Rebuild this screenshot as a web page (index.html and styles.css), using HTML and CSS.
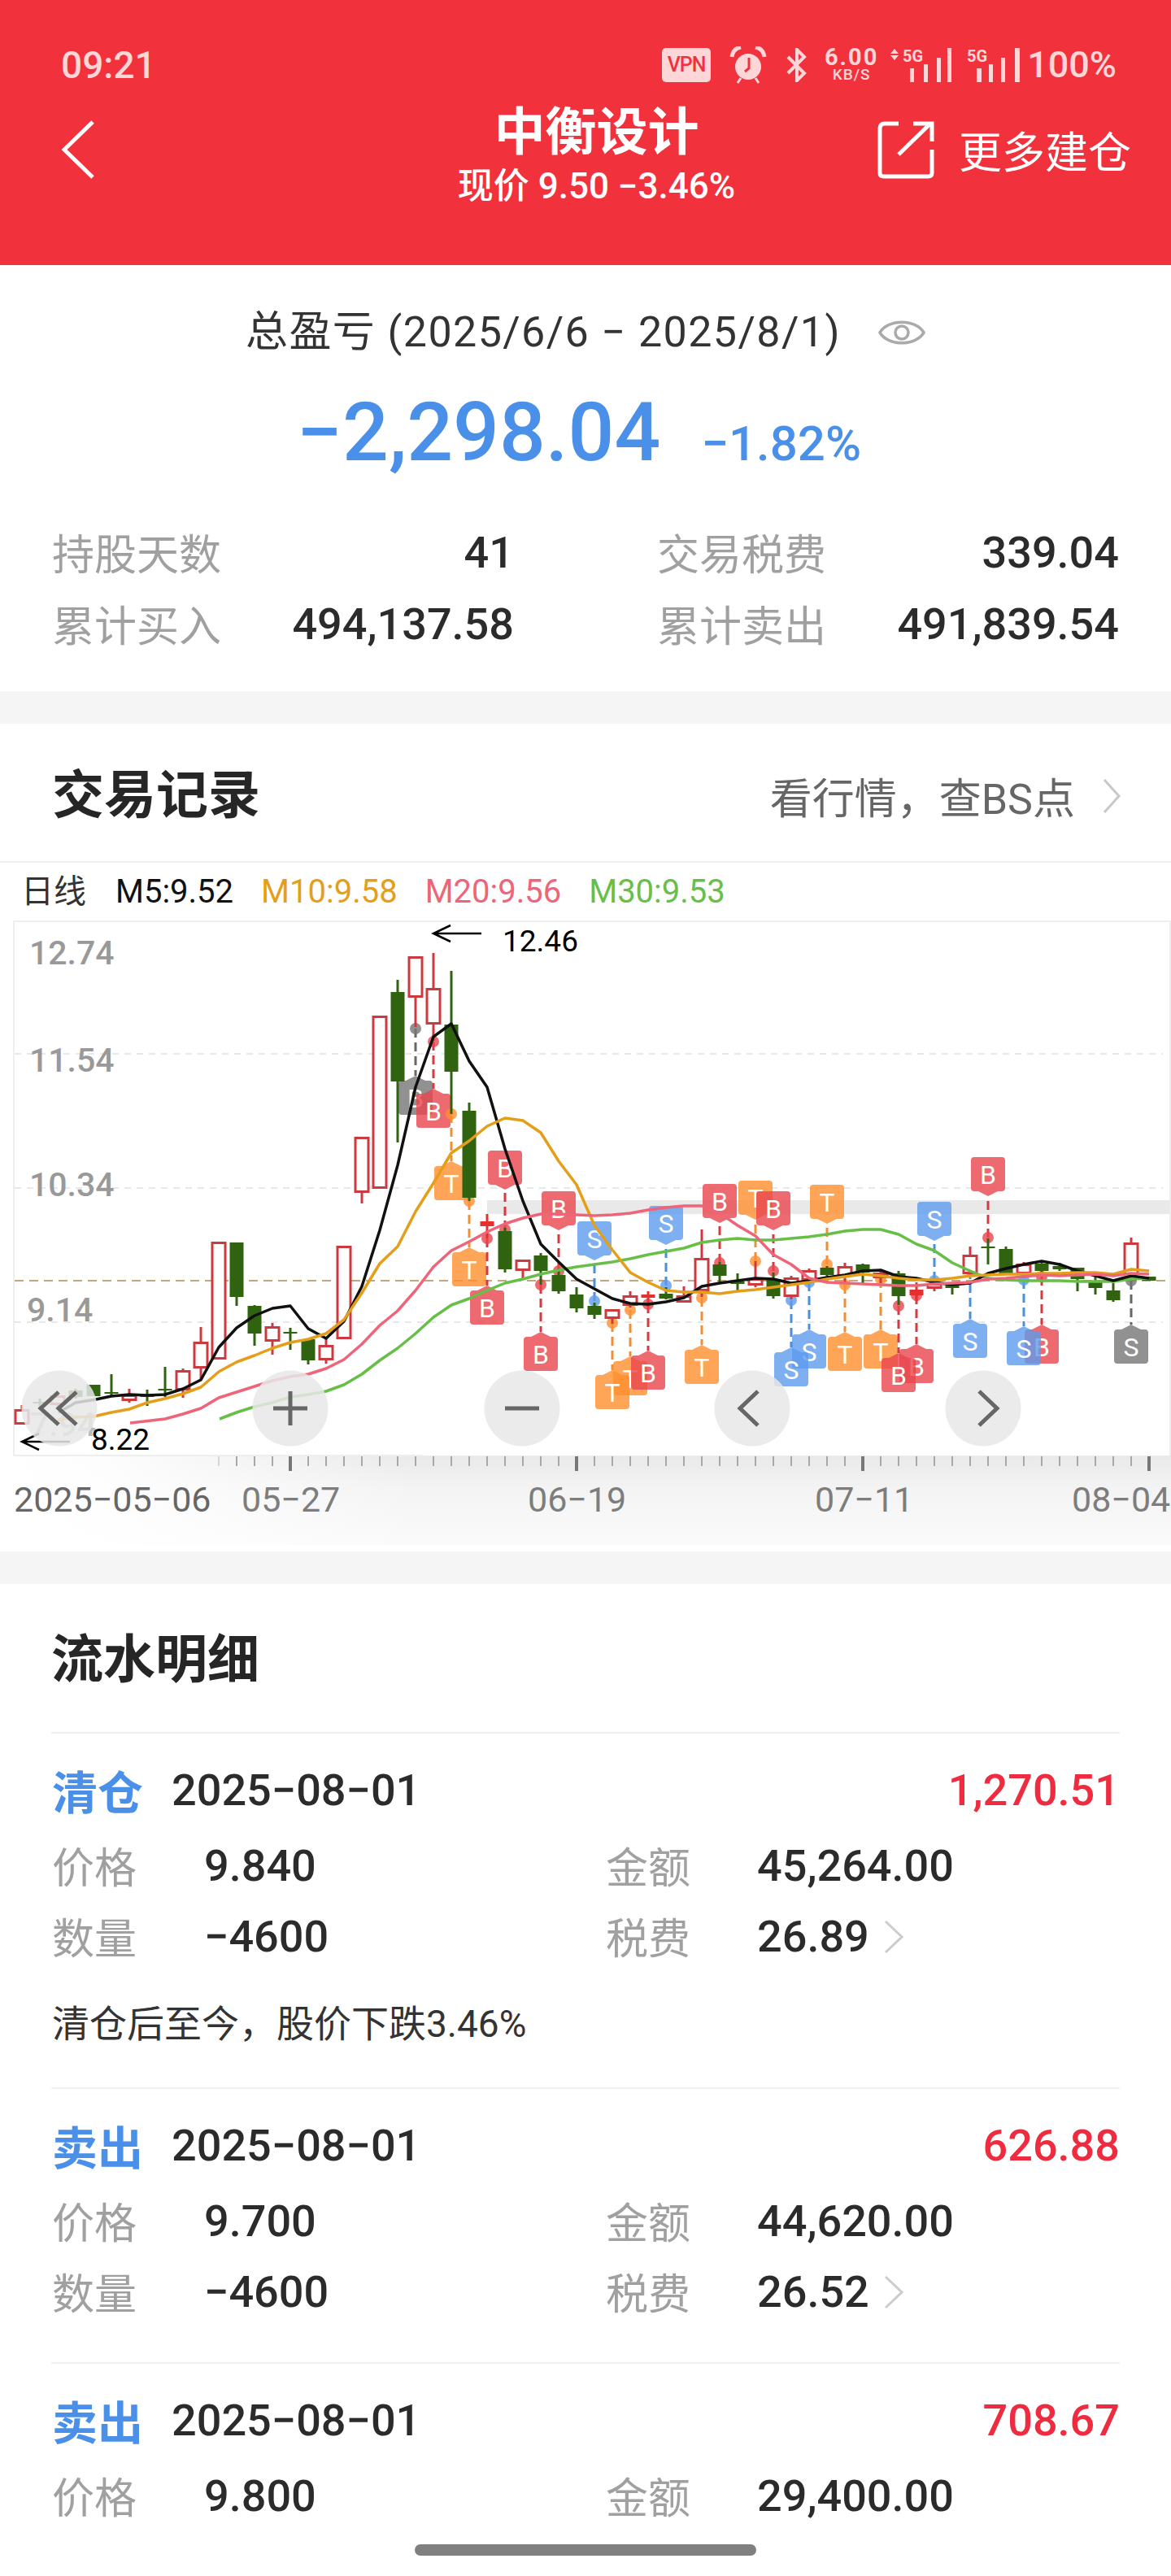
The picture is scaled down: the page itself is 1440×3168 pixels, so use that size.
FILE: index.html
```html
<!DOCTYPE html>
<html lang="zh-CN">
<head>
<meta charset="utf-8">
<title>中衡设计</title>
<link rel="stylesheet" href="styles.css">
</head>
<body>
<div class="page">
  <header class="topbar">
    <div class="status">
      <span class="clock">09:21</span>
      <div class="status-icons">
        <span class="vpn">VPN</span>
        <svg class="alarm" viewBox="0 0 46 46" aria-hidden="true">
          <circle cx="23" cy="25" r="16" fill="#ffd6d8"/>
          <path d="M24 14v13l-5 4" fill="none" stroke="#f1323c" stroke-width="3"/>
          <path d="M3 13C4 6 8 2 14 1M43 13C42 6 38 2 32 1" fill="none" stroke="#ffd6d8" stroke-width="5"/>
          <path d="M10 45l4-6M36 45l-4-6" fill="none" stroke="#ffd6d8" stroke-width="3"/>
        </svg>
        <svg class="bt" viewBox="0 0 27 42" aria-hidden="true">
          <path d="M3 11l20 20-9 9V2l9 9L3 31" fill="none" stroke="#ffd6d8" stroke-width="4"/>
        </svg>
        <span class="speed"><b>6.00</b><i>KB/S</i></span>
        <svg class="sig sig-a" viewBox="0 0 76 42" aria-hidden="true">
          <path d="M6 1l5 6H1zM6 15l5-6H1z" fill="#ffd6d8"/>
          <text x="16" y="17" class="sig-label">5G</text>
          <path d="M25 25h5v17h-5zM42 20h5v22h-5zM58 12h5v30h-5zM71 0h5v42h-5z" fill="#ffd6d8"/>
        </svg>
        <svg class="sig sig-b" viewBox="0 0 59 42" aria-hidden="true">
          <text x="-6" y="17" class="sig-label">5G</text>
          <path d="M6 25h6v17H6zM21 20h5v22h-5zM36 12h5v30h-5zM53 0h6v42h-6z" fill="#ffd6d8"/>
        </svg>
        <span class="battery">100%</span>
      </div>
    </div>
    <nav class="nav">
      <svg class="back" viewBox="0 0 40 72" aria-hidden="true">
        <path d="M38 2L3 36l35 34" fill="none" stroke="#fff" stroke-width="5"/>
      </svg>
      <div class="heading">
        <h1>中衡设计</h1>
        <p>现价 9.50 −3.46%</p>
      </div>
      <div class="more">
        <svg class="share" viewBox="0 0 70 72" aria-hidden="true">
          <path d="M26 4H9Q3 4 3 10v55q0 4 5 4h54q5 0 5-4V36" fill="none" stroke="#fff" stroke-width="5"/>
          <path d="M26 42L64 5M44 4h23v22" fill="none" stroke="#fff" stroke-width="5"/>
        </svg>
        <span>更多建仓</span>
      </div>
    </nav>
  </header>

  <section class="summary">
    <div class="range">
      <span>总盈亏 (2025/6/6 − 2025/8/1)</span>
      <svg class="eye" viewBox="0 0 58 42" aria-hidden="true">
        <path d="M2 21C12 4 46 4 56 21 46 38 12 38 2 21z" fill="none" stroke="#aaa" stroke-width="3.5"/>
        <circle cx="29" cy="21" r="8" fill="none" stroke="#aaa" stroke-width="3.5"/>
      </svg>
    </div>
    <div class="profit">
      <strong>−2,298.04</strong>
      <span>−1.82%</span>
    </div>
    <dl class="stats">
      <div><dt>持股天数</dt><dd>41</dd></div>
      <div><dt>交易税费</dt><dd>339.04</dd></div>
      <div><dt>累计买入</dt><dd>494,137.58</dd></div>
      <div><dt>累计卖出</dt><dd>491,839.54</dd></div>
    </dl>
  </section>

  <section class="panel trades">
    <div class="trades-head">
      <h2>交易记录</h2>
      <div class="quote-link">
        <span>看行情，查BS点</span>
        <svg class="chev" viewBox="0 0 22 44" aria-hidden="true"><path d="M2 2l18 20L2 42" fill="none" stroke="#c8c8c8" stroke-width="3"/></svg>
      </div>
    </div>
    <div class="legend">
      <span class="lg-day">日线</span>
      <span class="lg-m5">M5:9.52</span>
      <span class="lg-m10">M10:9.58</span>
      <span class="lg-m20">M20:9.56</span>
      <span class="lg-m30">M30:9.53</span>
    </div>
    <svg id="kline" class="kline" viewBox="0 1132 1440 768" width="1440" height="768"></svg>
  </section>

  <section class="panel ledger">
    <h2>流水明细</h2>
    <article class="entry">
      <div class="entry-head"><b class="tag">清仓</b><span class="date">2025−08−01</span><span class="gain">1,270.51</span></div>
      <div class="grid">
        <span class="k">价格</span><span class="v">9.840</span><span class="k">金额</span><span class="v">45,264.00</span>
        <span class="k">数量</span><span class="v">−4600</span><span class="k">税费</span>
        <span class="v with-chev">26.89<svg class="chev-sm" viewBox="0 0 24 42" aria-hidden="true"><path d="M2 2l20 19L2 40" fill="none" stroke="#ccc" stroke-width="3"/></svg></span>
      </div>
      <p class="note">清仓后至今，股价下跌3.46%</p>
    </article>
    <article class="entry">
      <div class="entry-head"><b class="tag">卖出</b><span class="date">2025−08−01</span><span class="gain">626.88</span></div>
      <div class="grid">
        <span class="k">价格</span><span class="v">9.700</span><span class="k">金额</span><span class="v">44,620.00</span>
        <span class="k">数量</span><span class="v">−4600</span><span class="k">税费</span>
        <span class="v with-chev">26.52<svg class="chev-sm" viewBox="0 0 24 42" aria-hidden="true"><path d="M2 2l20 19L2 40" fill="none" stroke="#ccc" stroke-width="3"/></svg></span>
      </div>
    </article>
    <article class="entry">
      <div class="entry-head"><b class="tag">卖出</b><span class="date">2025−08−01</span><span class="gain">708.67</span></div>
      <div class="grid">
        <span class="k">价格</span><span class="v">9.800</span><span class="k">金额</span><span class="v">29,400.00</span>
      </div>
    </article>
  </section>

  <div class="home-bar"></div>
</div>
<script src="chart.js"></script>
</body>
</html>
```
FILE: styles.css
```css
* { box-sizing: border-box; }
html, body { margin: 0; padding: 0; background: #fff; }
body { font-family: Roboto, "Noto Sans CJK SC", sans-serif; color: #2b2b2b; }
h1, h2, p, dl, dd { margin: 0; }

.page { position: relative; width: 1440px; height: 3168px; overflow: hidden; background: #fff; }

/* red title area */
.topbar { height: 326px; background: #f1323c; color: #fff; }
.status { display: flex; justify-content: space-between; align-items: center; height: 46px; margin-top: 0; padding: 0 67px 0 75px; position: relative; top: 57px; color: #ffd6d8; }
.clock { font-size: 46px; font-weight: 500; line-height: 46px; }
.status-icons { display: flex; align-items: center; }
.vpn { width: 60px; height: 42px; border-radius: 5px; background: #ffd6d8; color: #f1323c; font-size: 25px; font-weight: 500; line-height: 42px; text-align: center; letter-spacing: -1px; }
.alarm { width: 46px; height: 46px; margin-left: 23px; }
.bt { width: 27px; height: 42px; margin-left: 23px; }
.speed { display: flex; flex-direction: column; align-items: center; width: 72px; margin-left: 18px; }
.speed b { font-size: 29px; font-weight: 700; line-height: 24px; letter-spacing: 2px; }
.speed i { font-size: 19px; font-weight: 500; font-style: normal; line-height: 20px; letter-spacing: 1px; }
.sig { height: 42px; }
.sig-a { width: 76px; margin-left: 11px; }
.sig-b { width: 59px; margin-left: 25px; overflow: visible; }
.sig-label { font-size: 20px; font-weight: 700; fill: #ffd6d8; }
.battery { font-size: 45px; font-weight: 500; line-height: 46px; margin-left: 9px; }

.nav { display: grid; grid-template-columns: 1fr auto 1fr; height: 140px; margin-top: 0; padding: 0 49px 0 76px; position: relative; top: 78px; }
.back { width: 40px; height: 72px; margin-top: 24px; }
.heading { text-align: center; }
.heading h1 { font-size: 63px; font-weight: 700; line-height: 78px; }
.heading p { font-size: 44px; font-weight: 500; line-height: 52px; margin-top: 1px; }
.more { display: flex; justify-content: flex-end; align-items: center; gap: 30px; height: 72px; margin-top: 24px; font-size: 53px; }
.share { width: 70px; height: 72px; }

/* profit summary */
.summary { height: 524px; padding-top: 53px; }
.range { display: flex; justify-content: center; align-items: center; gap: 46px; height: 60px; padding-right: 0; font-size: 52px; line-height: 60px; color: #333; letter-spacing: 1.4px; }
.eye { width: 58px; height: 42px; }
.profit { display: flex; justify-content: center; align-items: baseline; gap: 50px; height: 112px; margin-top: 37px; color: #4a90e8; padding-right: 16px; }
.profit strong { font-size: 100px; font-weight: 500; line-height: 112px; }
.profit span { font-size: 60px; font-weight: 500; }
.stats { display: grid; grid-template-columns: 568px 568px; column-gap: 176px; row-gap: 28px; margin-top: 66px; padding: 0 64px; }
.stats div { display: flex; justify-content: space-between; align-items: center; height: 60px; }
.stats dt { font-size: 52px; line-height: 60px; color: #a0a0a0; }
.stats dd { font-size: 54px; font-weight: 500; line-height: 60px; position: relative; top: -4px; }

.panel { border-top: 40px solid #f5f5f5; }
.panel h2 { font-size: 64px; font-weight: 700; line-height: 76px; color: #262626; }

/* trade chart */
.trades { height: 1058px; }
.trades-head { display: flex; justify-content: space-between; align-items: center; height: 171px; padding: 8px 62px 0 64px; border-bottom: 2px solid #f0f0f0; }
.quote-link { display: flex; align-items: center; gap: 34px; font-size: 52px; color: #666; }
.chev { width: 22px; height: 44px; }
.legend { display: flex; align-items: center; gap: 34px; height: 71px; padding-left: 26px; font-size: 40px; line-height: 44px; padding-top: 0; }
.lg-day { color: #333; margin-right: 2px; }
.lg-m5 { color: #111; }
.lg-m10 { color: #e59e1a; }
.lg-m20 { color: #ee6478; }
.lg-m30 { color: #67bf48; }
.kline { display: block; }
.price-label { font-size: 41px; font-weight: 500; fill: #999; }
.price-label.under { fill: #bbb; }
.extreme { font-size: 37px; fill: #000; }
.axis-date { font-size: 43px; fill: #7d7d7d; }
.axis-date.first { fill: #666; }
.badge-text { font-size: 32px; fill: #fff; text-anchor: middle; }

/* transaction list */
.ledger { padding: 0 63px; }
.ledger h2 { height: 182px; padding-top: 56px; }
.entry { border-top: 2px solid #f0f0f0; padding: 44px 0 52px; }
.entry-head { display: flex; align-items: center; height: 60px; }
.tag { width: 148px; padding-left: 1px; font-size: 56px; font-weight: 700; line-height: 60px; color: #4a90e8; }
.date { font-size: 54px; font-weight: 500; line-height: 60px; position: relative; top: -4px; }
.gain { margin-left: auto; font-size: 54px; font-weight: 500; line-height: 60px; color: #ee2b3f; position: relative; top: -4px; }
.grid { display: grid; grid-template-columns: 187px 494px 186px 1fr; row-gap: 27px; margin-top: 33px; padding-left: 1px; align-items: center; }
.k { font-size: 52px; line-height: 60px; color: #a0a0a0; }
.v { font-size: 54px; font-weight: 500; line-height: 60px; position: relative; top: -4px; }
.with-chev { display: flex; align-items: center; gap: 18px; }
.chev-sm { width: 24px; height: 42px; }
.note { height: 52px; margin-top: 47px; padding-left: 1px; font-size: 46px; line-height: 52px; color: #333; }

.home-bar { position: absolute; left: 510px; bottom: 25px; width: 420px; height: 14px; border-radius: 7px; background: #808080; }
```
FILE: chart.js
```js
// Draws the daily k-line with moving averages and trade markers.
const NS = 'http://www.w3.org/2000/svg';
const svg = document.getElementById('kline');

function el(name, attrs, text) {
  const n = document.createElementNS(NS, name);
  for (const k in attrs) n.setAttribute(k, attrs[k]);
  if (text !== undefined) n.textContent = text;
  svg.appendChild(n);
  return n;
}

const RED = '#cc3a40', BRIGHT = '#e5302f', GREEN = '#2f6310';
const colX = i => 27 + 22 * i;

// [column, rising?, wick top, body top, body bottom, wick bottom]
const candles = [
  [0,1,1728,1733,1752,1752],[1,0,1720,1724,1726,1733],[2,1,1712,1716,1728,1730],[3,0,1708,1710,1718,1720],
  [4,0,1703,1703,1717,1717],[5,0,1690,1712,1714,1718],[6,1,1708,1715,1723,1725],[7,0,1709,1715,1718,1729],
  [8,0,1681,1708,1710,1718],[9,1,1683,1685,1710,1719],[10,1,1632,1650,1683,1697],[11,1,1527,1527,1672,1672],
  [12,0,1528,1528,1595,1606],[13,0,1605,1606,1640,1655],[14,1,1627,1631,1650,1666],[15,0,1633,1638,1640,1660],
  [16,0,1647,1647,1673,1678],[17,1,1647,1654,1673,1677],[18,1,1532,1532,1647,1647],[19,1,1398,1398,1467,1480],
  [20,1,1249,1249,1462,1462],[21,0,1205,1220,1330,1405],[22,1,1176,1176,1227,1263],[23,1,1172,1215,1260,1280],
  [24,0,1194,1260,1318,1370],[25,0,1356,1366,1473,1477],[26,2,1493,1502,1508,1523],[27,0,1510,1514,1561,1565],
  [28,1,1549,1549,1563,1573],[29,0,1541,1544,1563,1580],[30,0,1560,1568,1588,1591],[31,0,1583,1592,1609,1614],
  [32,0,1602,1606,1617,1622],[33,1,1610,1610,1622,1628],[34,1,1588,1593,1606,1608],[35,2,1588,1592,1596,1607],
  [36,0,1583,1591,1597,1598],[37,1,1582,1593,1602,1602],[38,1,1512,1547,1588,1595],[39,0,1552,1555,1569,1577],
  [40,0,1566,1576,1579,1588],[41,1,1551,1572,1581,1583],[42,0,1565,1573,1594,1597],[43,1,1569,1571,1595,1598],
  [44,1,1560,1562,1575,1576],[45,0,1557,1559,1568,1572],[46,1,1553,1557,1570,1577],[47,0,1554,1555,1565,1578],
  [48,1,1563,1565,1572,1578],[49,0,1563,1566,1594,1605],[50,2,1577,1586,1593,1600],[51,1,1576,1578,1585,1588],
  [52,0,1577,1580,1584,1592],[53,1,1533,1543,1567,1568],[54,0,1523,1533,1534,1555],[55,0,1533,1536,1566,1567],
  [56,1,1552,1554,1567,1572],[57,0,1552,1554,1563,1567],[58,0,1553,1557,1561,1563],[59,0,1559,1559,1573,1588],
  [60,0,1570,1577,1584,1592],[61,0,1578,1587,1599,1601],[62,1,1522,1528,1568,1575],[63,0,1570,1570,1575,1575]
];

const ma5 = '72,1737 93,1725 118,1721 137,1717 159,1715 181,1716 203,1715 225,1708 247,1697 269,1657 291,1633 313,1618 335,1609 357,1606 379,1634 401,1646 423,1625 445,1582 467,1513 489,1433 511,1337 533,1275 555,1259 577,1305 599,1337 621,1413 643,1477 665,1530 687,1552 709,1573 731,1585 753,1597 775,1603 797,1604 819,1601 841,1596 863,1582 885,1578 907,1575 929,1572 951,1573 973,1578 995,1575 1017,1571 1039,1568 1061,1563 1083,1562 1105,1570 1127,1572 1149,1577 1171,1580 1193,1578 1215,1566 1237,1560 1259,1555 1281,1551 1303,1555 1325,1563 1347,1569 1369,1575 1391,1569 1413,1572';
const ma10 = '71,1746 93,1743 115,1742 137,1737 159,1733 181,1725 203,1720 225,1714 247,1706 269,1687 291,1675 313,1667 335,1658 357,1651 379,1647 401,1640 423,1623 445,1590 467,1554 489,1533 511,1490 533,1455 555,1418 577,1403 599,1385 621,1375 643,1378 665,1393 687,1428 709,1457 731,1507 753,1537 775,1565 797,1577 819,1587 841,1589 863,1589 885,1591 907,1588 929,1586 951,1583 973,1580 995,1577 1017,1573 1039,1570 1061,1567 1083,1569 1105,1572 1127,1574 1149,1574 1171,1572 1193,1569 1215,1568 1237,1567 1259,1567 1281,1566 1303,1566 1325,1565 1347,1565 1369,1567 1391,1561 1413,1563';
const ma20 = '160,1750 203,1745 225,1739 247,1732 269,1719 291,1712 313,1705 335,1698 357,1693 379,1690 401,1683 423,1672 445,1653 467,1630 489,1612 511,1587 533,1558 555,1538 577,1527 599,1515 621,1505 643,1498 665,1493 687,1493 709,1494 731,1495 753,1494 775,1492 797,1488 819,1485 841,1483 863,1483 885,1492 907,1507 929,1520 951,1543 973,1555 995,1572 1017,1577 1039,1578 1061,1579 1083,1580 1105,1581 1127,1581 1149,1579 1171,1578 1193,1577 1215,1573 1237,1572 1259,1570 1281,1568 1303,1569 1325,1568 1347,1567 1369,1569 1391,1566 1413,1567';
const ma30 = '270,1745 291,1737 313,1730 335,1725 357,1718 379,1715 401,1711 423,1703 445,1690 467,1673 489,1658 511,1640 533,1620 555,1605 577,1597 599,1587 621,1578 643,1573 665,1567 687,1562 709,1558 731,1555 753,1552 775,1548 797,1543 819,1539 841,1535 863,1528 885,1525 907,1523 929,1525 951,1525 973,1523 995,1521 1017,1518 1039,1514 1061,1512 1083,1512 1105,1518 1127,1530 1149,1538 1171,1553 1193,1563 1215,1572 1237,1574 1259,1575 1281,1575 1303,1575 1325,1576 1347,1576 1369,1576 1391,1573 1413,1572';

const KINDS = {
  B: { fill: '#e8454e', line: '#d43a42' },
  T: { fill: '#ff8f2e', line: '#ef8f35' },
  S: { fill: '#5c9bed', line: '#4b8fd8' },
  G: { fill: '#757575', line: '#666666' }
};

// [label, kind, x, dot y, badge top]; a badge above its dot points down, one below points up
const markers = [
  ['B','G',511,1265,1329],['B','B',533,1281,1345],['T','T',555,1370,1434],['B','B',621,1512,1415],
  ['T','T',577,1477,1540],['B','B',599,1523,1587],['B','B',665,1580,1644],['B','B',687,1563,1465],
  ['S','S',731,1600,1502],['S','S',819,1581,1483],['T','T',775,1611,1674],['T','T',753,1627,1691],
  ['B','B',797,1604,1667],['T','T',863,1596,1660],['B','B',885,1553,1456],['T','T',929,1551,1452],
  ['B','B',951,1563,1465],['T','T',1017,1555,1457],['S','S',1149,1575,1478],['B','B',1215,1522,1423],
  ['S','S',995,1577,1641],['S','S',973,1599,1663],['T','T',1039,1580,1644],['T','T',1083,1573,1641],
  ['B','B',1127,1593,1659],['B','B',1105,1606,1670],['S','S',1193,1562,1628],['B','B',1281,1570,1635],
  ['S','S',1259,1574,1637],['S','G',1391,1575,1635]
];

// faint backdrop under the time axis
const defs = el('defs', {});
defs.innerHTML =
  '<linearGradient id="axisFade" x1="0" y1="0" x2="0" y2="1"><stop offset="0" stop-color="#e9e9e9"/><stop offset=".35" stop-color="#f3f3f3"/><stop offset="1" stop-color="#fbfbfb"/></linearGradient>' +
  '<linearGradient id="axisLeft" x1="0" y1="0" x2="1" y2="0"><stop offset="0" stop-color="#fff"/><stop offset=".25" stop-color="#fff" stop-opacity=".9"/><stop offset="1" stop-color="#fff" stop-opacity="0"/></linearGradient>';
el('rect', { x: 0, y: 1790, width: 1440, height: 110, fill: 'url(#axisFade)' });
el('rect', { x: 0, y: 1790, width: 520, height: 110, fill: 'url(#axisLeft)' });

// frame, grid and reference price
el('path', { d: 'M17 1790V1133H1439V1790', fill: 'none', stroke: '#eee', 'stroke-width': 2 });
el('path', { d: 'M17 1790H520', fill: 'none', stroke: '#eee', 'stroke-width': 2 });
for (const y of [1296, 1461, 1626]) {
  el('line', { x1: 18, x2: 1430, y1: y, y2: y, stroke: '#e8e8e8', 'stroke-width': 2, 'stroke-dasharray': '8 7' });
}
el('rect', { x: 599, y: 1476, width: 840, height: 17, fill: '#e9e9e9' });
el('line', { x1: 18, x2: 1438, y1: 1575, y2: 1575, stroke: '#c4a57e', 'stroke-width': 2, 'stroke-dasharray': '11 7' });

// price scale
[['12.74', 36, 1186], ['11.54', 36, 1318], ['10.34', 36, 1471], ['9.14', 33, 1625]].forEach(([t, x, y]) => {
  el('text', { x, y, class: 'price-label' }, t);
});
el('text', { x: 37, y: 1766, class: 'price-label under' }, '7.94');

// marker stems and dots sit behind the candles
function badgePath(x, top, up) {
  const l = x - 21, r = x + 21, b = top + 42, c = 4;
  const tip = up
    ? `L${x + 12} ${top}L${x} ${top - 6}L${x - 12} ${top}`
    : '';
  const bottom = up ? '' : `L${x - 12} ${b}L${x} ${b + 6}L${x + 12} ${b}`;
  return `M${l + c} ${top}${up ? '' : ''}` +
    (up ? `L${x - 12} ${top}L${x} ${top - 6}L${x + 12} ${top}` : '') +
    `L${r - c} ${top}Q${r} ${top} ${r} ${top + c}L${r} ${b - c}Q${r} ${b} ${r - c} ${b}` +
    (up ? '' : `L${x + 12} ${b}L${x} ${b + 6}L${x - 12} ${b}`) +
    `L${l + c} ${b}Q${l} ${b} ${l} ${b - c}L${l} ${top + c}Q${l} ${top} ${l + c} ${top}Z`;
}

markers.forEach(([label, kind, x, dot, top]) => {
  const k = KINDS[kind];
  const up = top > dot;
  const y2 = up ? top - 6 : top + 48;
  el('line', { x1: x, x2: x, y1: dot, y2, stroke: k.line, 'stroke-width': 3, 'stroke-dasharray': '11 6' });
  el('circle', { cx: x, cy: dot, r: 7, fill: k.fill, opacity: .8 });
  el('path', { d: badgePath(x, top, up), fill: k.fill, opacity: .8 });
  el('text', { x, y: top + 33, class: 'badge-text' }, label);
});

// candles
candles.forEach(([i, kind, wt, bt, bb, wb]) => {
  const x = colX(i);
  const color = kind === 0 ? GREEN : kind === 2 ? BRIGHT : RED;
  el('line', { x1: x, x2: x, y1: wt, y2: bt, stroke: color, 'stroke-width': 3 });
  el('line', { x1: x, x2: x, y1: bb, y2: wb, stroke: color, 'stroke-width': 3 });
  if (kind === 0 || kind === 2) {
    el('rect', { x: x - 8.5, y: bt, width: 17, height: Math.max(2, bb - bt), fill: color });
  } else {
    el('rect', { x: x - 8, y: bt + 1.5, width: 16, height: Math.max(2, bb - bt - 3), fill: '#fff', stroke: color, 'stroke-width': 3 });
  }
});

// moving averages
[[ma30, '#67bf48'], [ma5, '#111'], [ma10, '#e59e1a'], [ma20, '#ee6478']].forEach(([pts, color]) => {
  el('polyline', { points: pts, fill: 'none', stroke: color, 'stroke-width': 3.5, 'stroke-linejoin': 'round' });
});

// high and low callouts
function callout(x1, x2, y, tx, ty, text) {
  el('path', { d: `M${x2} ${y}H${x1}M${x1 + 21} ${y - 10}L${x1} ${y}L${x1 + 21} ${y + 10}`, fill: 'none', stroke: '#000', 'stroke-width': 2.5 });
  el('text', { x: tx, y: ty, class: 'extreme' }, text);
}
callout(533, 592, 1148, 618, 1170, '12.46');
callout(27, 86, 1773, 112, 1783, '8.22');

// time axis
for (let x = 269; x <= 1413; x += 22) {
  const major = (x - 357) % 352 === 0;
  el('rect', {
    x: major ? x - 2 : x - 1, y: 1791, width: major ? 4 : 2, height: major ? 18 : 12,
    fill: major ? '#777' : '#a8a8a8', opacity: x < 291 ? .4 : 1
  });
}
[['2025−05−06', 17, 'first'], ['05−27', 297, ''], ['06−19', 649, ''], ['07−11', 1002, ''], ['08−04', 1318, '']].forEach(([t, x, c]) => {
  el('text', { x, y: 1859, class: 'axis-date ' + c }, t);
});

// zoom and pan controls float over the plot
const ICONS = {
  73: 'M72 1712l-22 20 22 20M94 1712l-22 20 22 20',
  357: 'M336 1732h42M357 1711v42',
  642: 'M621 1732h42',
  925: 'M932 1711l-22 21 22 21',
  1209: 'M1204 1711l22 21-22 21'
};
for (const cx of Object.keys(ICONS)) {
  el('circle', { cx, cy: 1732, r: 46.5, fill: '#e8e8e8', opacity: .85 });
  el('path', { d: ICONS[cx], fill: 'none', stroke: '#666', 'stroke-width': 5 });
}
```
